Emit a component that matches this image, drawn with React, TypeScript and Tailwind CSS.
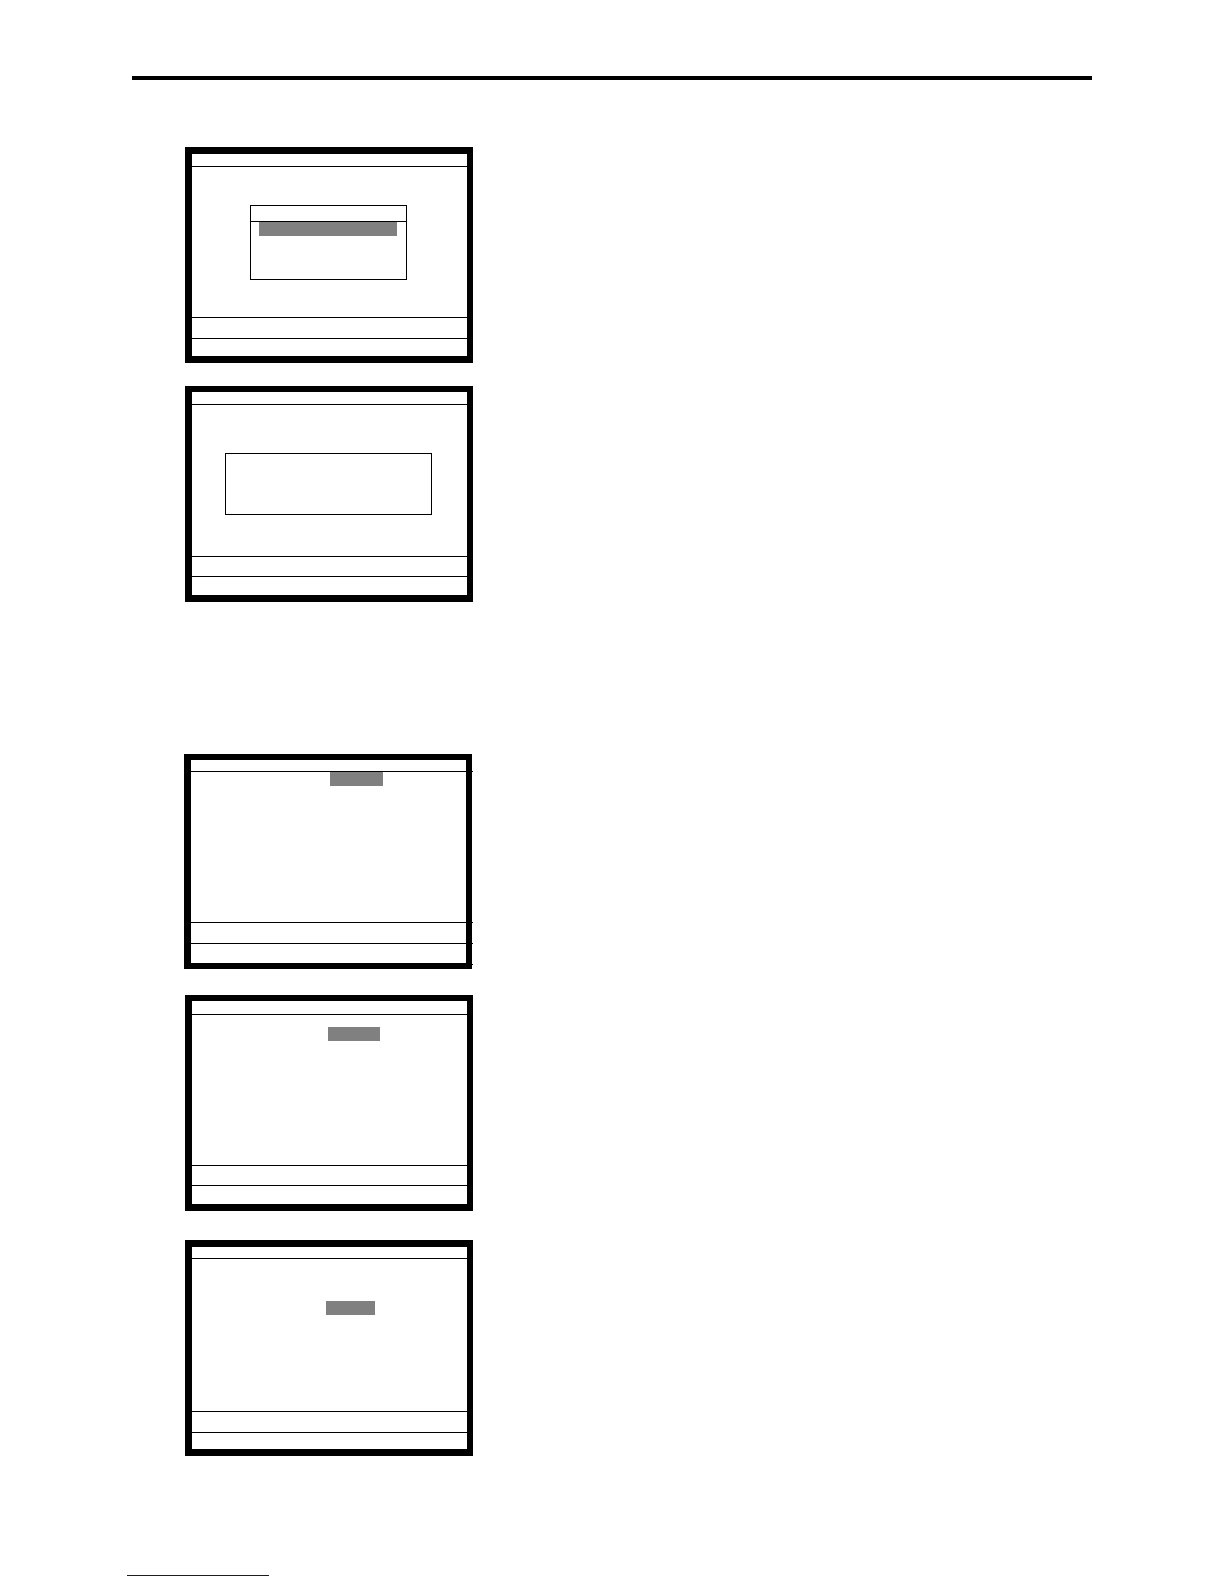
import type { ReactNode } from "react";

type ScreenProps = {
  frame: string;
  header: string;
  body: string;
  message: string;
  keys: string;
  children: ReactNode;
};

// A terminal screen: title bar, work area, message line and function key line.
function Screen({ frame, header, body, message, keys, children }: ScreenProps) {
  return (
    <section className={`relative w-72 border-black bg-white ${frame}`}>
      <header className={`box-content border-b border-black ${header}`} />
      <div className={`flex items-start ${body}`}>{children}</div>
      <div className={`box-content border-t border-black ${message}`} />
      <div className={`box-content border-t border-black ${keys}`} />
    </section>
  );
}

function Highlight({ className }: { className: string }) {
  return <div className={`h-3.5 bg-[#808080] ${className}`} />;
}

export default function App() {
  return (
    <div className="bg-white pb-2 font-['Liberation_Sans',sans-serif] text-black">
      <div className="pt-19">
        <hr className="mx-33 h-1 border-0 bg-black" />
      </div>

      <main className="mt-[67px] flex flex-col items-start pl-[185px]">
        <Screen
          frame="border-y-7 border-l-7 border-r-6"
          header="h-3"
          body="h-[150px]"
          message="h-5"
          keys="h-[17px]"
        >
          <div className="mt-[38px] ml-[58px] h-[75px] w-[157px] border border-black">
            <div className="box-content h-[15px] border-b border-black" />
            <Highlight className="mr-[9px] ml-2" />
          </div>
        </Screen>

        <Screen
          frame="mt-[23px] border-t-6 border-r-6 border-b-7 border-l-7"
          header="h-3"
          body="h-[151px]"
          message="h-[19px]"
          keys="h-[18px]"
        >
          <div className="mt-12 ml-[33px] h-[62px] w-[207px] border border-black" />
        </Screen>

        <Screen
          frame="mt-38 -ml-px border-y-6 border-l-7 border-r-6"
          header="-mr-[7px] h-[11px]"
          body="h-[150px]"
          message="-mr-[7px] h-5"
          keys="-mr-[7px] h-[19px]"
        >
          <Highlight className="ml-[139px] w-[53px]" />
          <span className="absolute -right-[7px] -bottom-0.5 h-px w-[7px] bg-black" />
        </Screen>

        <Screen
          frame="mt-[26px] border-t-6 border-r-6 border-b-7 border-l-7"
          header="h-[13px]"
          body="h-[150px]"
          message="h-[19px]"
          keys="h-[18px]"
        >
          <Highlight className="mt-3 ml-[136px] w-[52px]" />
        </Screen>

        <Screen
          frame="mt-[29px] border-y-7 border-l-7 border-r-6"
          header="h-[11px]"
          body="h-[152px]"
          message="h-5"
          keys="h-4"
        >
          <Highlight className="mt-[42px] ml-[134px] w-[49px]" />
        </Screen>
      </main>

      <footer className="mt-[103px] pl-[127px]">
        <a
          href="#top"
          aria-label="Back to top"
          className="block h-[17px] w-[142px] border-b border-[#0000ff]"
        />
      </footer>
    </div>
  );
}
